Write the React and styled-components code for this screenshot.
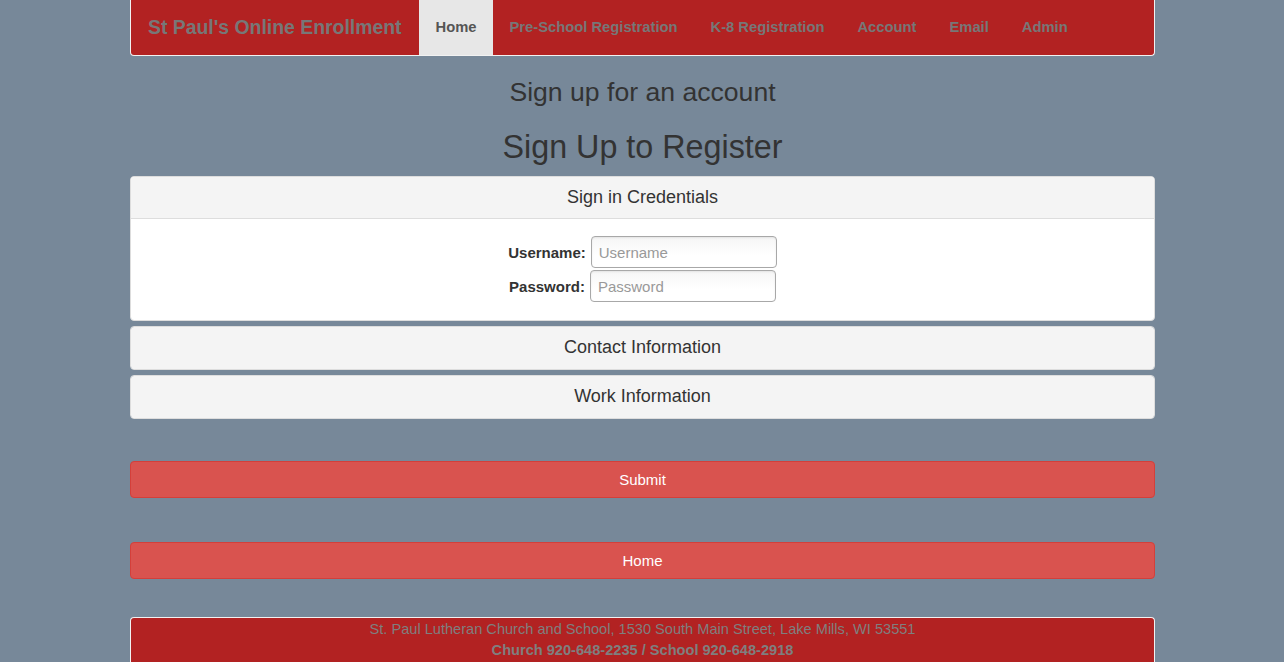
import React from "react";
import styled, { createGlobalStyle } from "styled-components";

const Global = createGlobalStyle`
  html, body { margin: 0; padding: 0; }
  body {
    background: #778899;
    font-family: "Liberation Sans", Arial, Helvetica, sans-serif;
    font-size: 15px;
    color: #333;
  }
`;

const Container = styled.div`
  width: 1025px;
  margin-left: 130px;
  display: flex;
  flex-direction: column;
`;

const Navbar = styled.nav`
  display: flex;
  align-items: stretch;
  height: 55px;
  background: #b22222;
  border: 1px solid #f2f2f2;
  border-top: none;
  border-radius: 0 0 4px 4px;
`;

const Brand = styled.a`
  font-size: 19.4px;
  font-weight: bold;
  color: #777;
  padding: 17px 17.5px 0 17px;
  line-height: 21px;
  text-decoration: none;
`;

const NavLink = styled.a`
  font-weight: bold;
  font-size: 14.75px;
  line-height: 20px;
  padding: 17px 16.5px 0;
  color: ${(p) => (p.$active ? "#555" : "#777")};
  background: ${(p) => (p.$active ? "#e7e7e7" : "transparent")};
  text-decoration: none;
`;

const SubTitle = styled.h3`
  margin: 22px 0 0;
  font-size: 26.6px;
  font-weight: normal;
  line-height: 29px;
  text-align: center;
  color: #333;
`;

const Title = styled.h1`
  margin: 22px 0 11px;
  font-size: 32.3px;
  font-weight: normal;
  line-height: 36px;
  text-align: center;
  color: #333;
`;

const PanelGroup = styled.div`
  display: flex;
  flex-direction: column;
  gap: 5px;
`;

const Panel = styled.div`
  background: #fff;
  border: 1px solid #ddd;
  border-radius: 4px;
  overflow: hidden;
`;

const PanelHeading = styled.div`
  background: #f4f4f4;
  padding: 10px 15px;
  font-size: 18px;
  line-height: 21px;
  text-align: center;
  color: #333;
  border-bottom: 1px solid ${(p) => (p.$open ? "#ddd" : "#f4f4f4")};
`;

const PanelBody = styled.div`
  padding: 17px 15px 18px;
  display: flex;
  flex-direction: column;
  align-items: center;
  gap: 2px;
`;

const FieldRow = styled.div`
  display: flex;
  align-items: center;
`;

const Label = styled.label`
  font-weight: bold;
  font-size: 15px;
  color: #333;
  margin-right: 5px;
`;

const Input = styled.input`
  box-sizing: border-box;
  width: 186px;
  height: 32px;
  border: 1px solid #a8a8a8;
  border-radius: 4px;
  padding: 0 7px;
  font-family: inherit;
  font-size: 15px;
  background: linear-gradient(#f6f6f6, #fff 60%);
  box-shadow: inset 0 1px 2px rgba(0, 0, 0, 0.08);
  &::placeholder { color: #999; }
`;

const Button = styled.button`
  box-sizing: border-box;
  width: 100%;
  height: 37px;
  margin-top: ${(p) => p.$mt}px;
  background: #d9534f;
  border: 1px solid #d43f3a;
  border-radius: 4px;
  color: #fff;
  font-family: inherit;
  font-size: 15px;
`;

const Footer = styled.footer`
  margin-top: 38px;
  background: #b22222;
  border: 1px solid #f2f2f2;
  border-bottom: none;
  border-radius: 4px 4px 0 0;
  text-align: center;
  color: #7f7f7f;
  padding-top: 1px;
  height: 60px;
`;

const FooterLine = styled.div`
  font-size: 14.6px;
  line-height: 21px;
  font-weight: ${(p) => (p.$bold ? "bold" : "normal")};
`;

export default function App() {
  return (
    <>
      <Global />
      <Container>
        <Navbar>
          <Brand>St Paul's Online Enrollment</Brand>
          <NavLink $active>Home</NavLink>
          <NavLink>Pre-School Registration</NavLink>
          <NavLink>K-8 Registration</NavLink>
          <NavLink>Account</NavLink>
          <NavLink>Email</NavLink>
          <NavLink>Admin</NavLink>
        </Navbar>
        <SubTitle>Sign up for an account</SubTitle>
        <Title>Sign Up to Register</Title>
        <PanelGroup>
          <Panel>
            <PanelHeading $open>Sign in Credentials</PanelHeading>
            <PanelBody>
              <FieldRow>
                <Label>Username:</Label>
                <Input placeholder="Username" />
              </FieldRow>
              <FieldRow>
                <Label>Password:</Label>
                <Input type="password" placeholder="Password" />
              </FieldRow>
            </PanelBody>
          </Panel>
          <Panel>
            <PanelHeading>Contact Information</PanelHeading>
          </Panel>
          <Panel>
            <PanelHeading>Work Information</PanelHeading>
          </Panel>
        </PanelGroup>
        <Button $mt={42}>Submit</Button>
        <Button $mt={44}>Home</Button>
        <Footer>
          <FooterLine>
            St. Paul Lutheran Church and School, 1530 South Main Street, Lake Mills, WI 53551
          </FooterLine>
          <FooterLine $bold>Church 920-648-2235 / School 920-648-2918</FooterLine>
        </Footer>
      </Container>
    </>
  );
}
